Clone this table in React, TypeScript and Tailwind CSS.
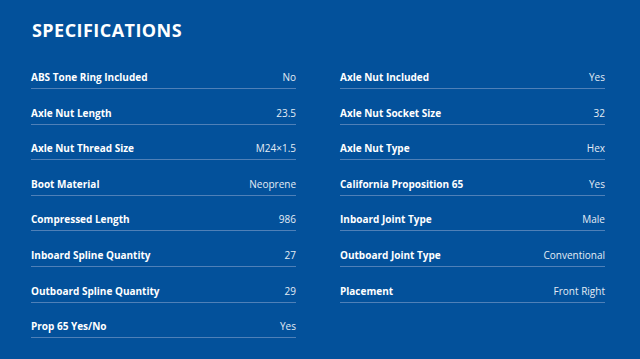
const left = [
  ['ABS Tone Ring Included', 'No'],
  ['Axle Nut Length', '23.5'],
  ['Axle Nut Thread Size', 'M24×1.5'],
  ['Boot Material', 'Neoprene'],
  ['Compressed Length', '986'],
  ['Inboard Spline Quantity', '27'],
  ['Outboard Spline Quantity', '29'],
  ['Prop 65 Yes/No', 'Yes'],
];

const right = [
  ['Axle Nut Included', 'Yes'],
  ['Axle Nut Socket Size', '32'],
  ['Axle Nut Type', 'Hex'],
  ['California Proposition 65', 'Yes'],
  ['Inboard Joint Type', 'Male'],
  ['Outboard Joint Type', 'Conventional'],
  ['Placement', 'Front Right'],
];

function Column({ rows }: { rows: string[][] }) {
  return (
    <div className="flex flex-col">
      {rows.map(([label, value]) => (
        <div
          key={label}
          className="h-[35.6px] flex items-end justify-between pb-[5px] border-b border-[#4f80b8]"
        >
          <span className="text-[10px] leading-[12px] font-bold text-white">{label}</span>
          <span className="text-[10px] leading-[12px] text-[#e4ecf5]">{value}</span>
        </div>
      ))}
    </div>
  );
}

export default function App() {
  return (
    <div
      className="w-[640px] h-[359px] bg-[#03519b] pt-[18px] pl-[31px] pr-[35px] overflow-hidden"
      style={{ fontFamily: '"Open Sans", sans-serif' }}
    >
      <h2 className="text-[18px] leading-[24px] font-bold tracking-[0.45px] text-white mb-[11.4px] pl-[1px]">SPECIFICATIONS</h2>
      <div className="grid grid-cols-[265px_265px] gap-x-[44px]">
        <Column rows={left} />
        <Column rows={right} />
      </div>
    </div>
  );
}
